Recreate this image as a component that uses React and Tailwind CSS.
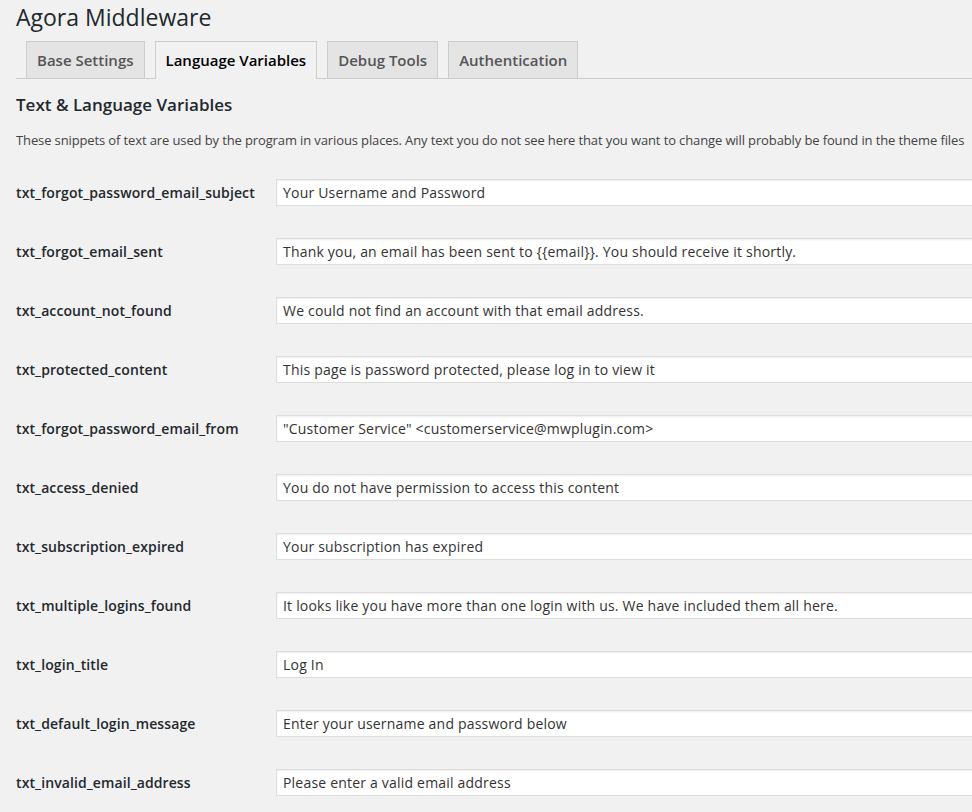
import React from "react";

const rows = [
  ["txt_forgot_password_email_subject", "Your Username and Password"],
  ["txt_forgot_email_sent", "Thank you, an email has been sent to {{email}}. You should receive it shortly."],
  ["txt_account_not_found", "We could not find an account with that email address."],
  ["txt_protected_content", "This page is password protected, please log in to view it"],
  ["txt_forgot_password_email_from", "\"Customer Service\" <customerservice@mwplugin.com>"],
  ["txt_access_denied", "You do not have permission to access this content"],
  ["txt_subscription_expired", "Your subscription has expired"],
  ["txt_multiple_logins_found", "It looks like you have more than one login with us. We have included them all here."],
  ["txt_login_title", "Log In"],
  ["txt_default_login_message", "Enter your username and password below"],
  ["txt_invalid_email_address", "Please enter a valid email address"],
];

const tabs = [
  ["Base Settings", false],
  ["Language Variables", true],
  ["Debug Tools", false],
  ["Authentication", false],
];

export default function App() {
  return (
    <div className="w-[972px] h-[812px] overflow-hidden bg-[#f1f1f1] font-['Open_Sans',sans-serif] text-[#444]">
      <div className="pl-[16px]">
        <h1 className="pt-[1px] h-[41px] text-[23px] leading-[32px] font-normal text-[#23282d]">Agora Middleware</h1>
        <div className="flex h-[38px] items-end border-b border-[#ccc] pl-[10px] gap-[10px]">
          {tabs.map(([label, active]) => (
            <div
              key={label}
              className={
                active
                  ? "h-[38px] -mb-[1px] px-[10px] flex items-center border border-b-0 border-[#ccc] bg-[#f1f1f1] text-[15px] font-semibold text-black"
                  : "h-[37px] px-[10px] flex items-center border border-b-0 border-[#ccc] bg-[#e4e4e4] text-[15px] font-semibold text-[#555]"
              }
            >
              {label}
            </div>
          ))}
        </div>
        <h2 className="mt-[14px] text-[17px] leading-[24px] font-semibold text-[#23282d]">Text &amp; Language Variables</h2>
        <p className="mt-[13px] text-[13px] leading-[20px] whitespace-nowrap tracking-[-0.12px]">
          These snippets of text are used by the program in various places. Any text you do not see here that you want to change will probably be found in the theme files
        </p>
        <div className="mt-[20px]">
          {rows.map(([k, v]) => (
            <div key={k} className="flex items-start h-[59px] pt-[9px]">
              <div className="w-[260px] shrink-0 pt-[5px] text-[14px] leading-[18px] font-semibold text-[#23282d] tracking-[0.1px]">{k}</div>
              <div className="w-[800px] shrink-0 h-[27px] border border-[#ddd] bg-white shadow-[inset_0_1px_2px_rgba(0,0,0,0.07)] pl-[6px] text-[14px] leading-[25px] text-[#333] whitespace-nowrap tracking-[0.2px]">
                {v}
              </div>
            </div>
          ))}
        </div>
      </div>
    </div>
  );
}
